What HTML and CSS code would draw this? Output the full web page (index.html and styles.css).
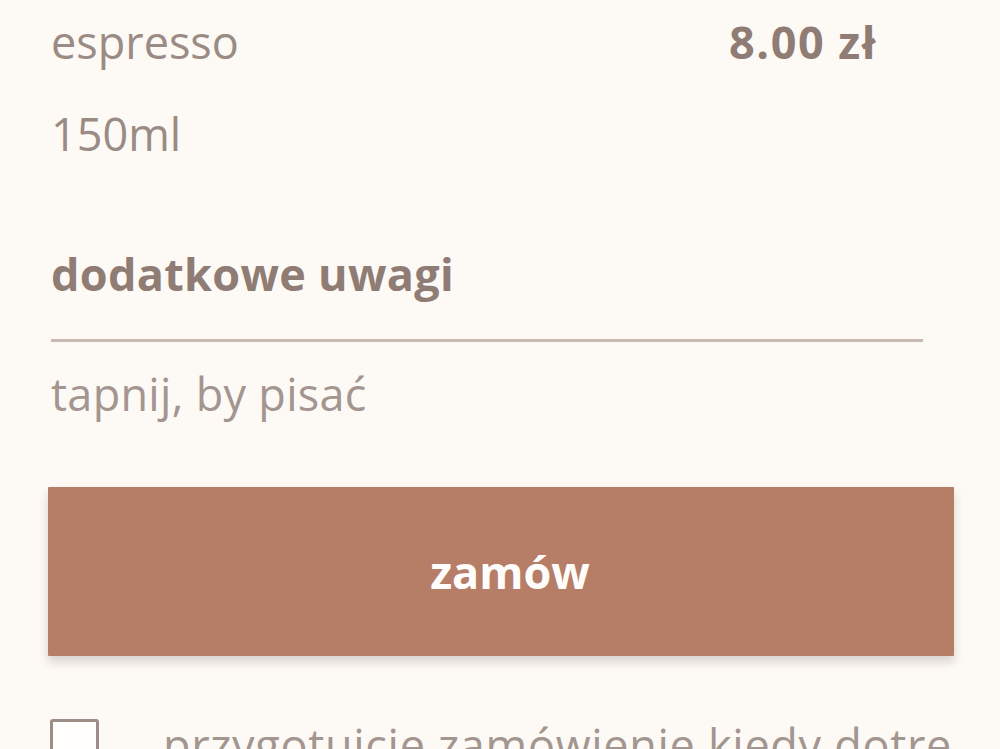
FILE: index.html
```html
<!DOCTYPE html>
<html lang="pl">
<head>
<meta charset="utf-8">
<title>zamówienie</title>
<link rel="stylesheet" href="styles.css">
</head>
<body>
<main class="order">
  <div class="item">
    <div class="item-info">
      <div class="item-name">espresso</div>
      <div class="item-size">150ml</div>
    </div>
    <div class="item-price">8.00 zł</div>
  </div>

  <section class="notes">
    <h2 class="notes-label">dodatkowe uwagi</h2>
    <div class="notes-rule"></div>
    <div class="notes-input">tapnij, by pisać</div>
  </section>

  <button class="order-button" type="button">zamów</button>

  <label class="arrival">
    <span class="arrival-box"></span>
    <span class="arrival-text">przygotujcie zamówienie kiedy dotrę</span>
  </label>
</main>
</body>
</html>
```

FILE: styles.css
```css
html, body {
  margin: 0;
  padding: 0;
  background: #fdf9f5;
}

body {
  font-family: "Open Sans", "Liberation Sans", sans-serif;
  font-size: 45px;
  color: #9a8b84;
  overflow: hidden;
  height: 749px;
}

.order {
  display: flex;
  flex-direction: column;
  padding: 12px 46px 0 51px;
}

.item {
  display: flex;
  justify-content: space-between;
  align-items: flex-start;
  width: 826px;
}

.item-name,
.item-size,
.item-price {
  line-height: 60px;
}

.item-size {
  margin-top: 32px;
}

.item-price {
  font-weight: 700;
  letter-spacing: 1.5px;
  color: #8f7d75;
}

.notes {
  margin-top: 80px;
  width: 872px;
}

.notes-label {
  margin: 0;
  font-size: 45px;
  font-weight: 700;
  line-height: 60px;
  letter-spacing: 0.3px;
  color: #8f7d75;
}

.notes-rule {
  margin-top: 35px;
  height: 3px;
  background: #c8bab2;
}

.notes-input {
  margin-top: 22px;
  line-height: 60px;
  letter-spacing: 0.3px;
  color: #a3958f;
}

.order-button {
  margin: 63px 0 0 -3px;
  padding: 0 0 0 18px;
  width: 906px;
  height: 169px;
  border: 0;
  border-radius: 1px;
  background: #b67e66;
  color: #fffdfb;
  font-family: inherit;
  font-size: 45px;
  font-weight: 700;
  box-shadow: 0 6px 10px rgba(60, 40, 30, 0.18);
}

.arrival {
  display: flex;
  align-items: flex-start;
  gap: 64px;
  margin-top: 63px;
  white-space: nowrap;
}

.arrival-box {
  flex: none;
  width: 43px;
  height: 43px;
  margin-left: -1px;
  border: 3px solid #9d8d87;
  border-radius: 3px;
  background: #fffefd;
}

.arrival-text {
  margin-top: -4px;
  line-height: 60px;
  letter-spacing: 0.7px;
  color: #a3958f;
}
```
